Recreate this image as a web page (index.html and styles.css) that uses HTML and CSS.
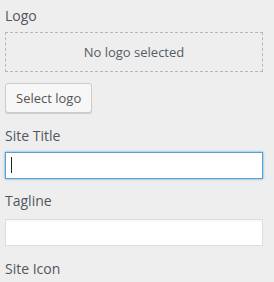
FILE: index.html
```html
<!DOCTYPE html>
<html>
<head>
<meta charset="utf-8">
<link rel="stylesheet" href="styles.css">
</head>
<body>
<div class="panel">
  <div class="control control-logo">
    <span class="title">Logo</span>
    <div class="placeholder">No logo selected</div>
    <button class="button" type="button">Select logo</button>
  </div>
  <div class="control control-site-title">
    <label class="title" for="site-title">Site Title</label>
    <div class="field-wrap">
      <input class="field focused" id="site-title" type="text">
      <span class="caret"></span>
    </div>
  </div>
  <div class="control control-tagline">
    <label class="title" for="tagline">Tagline</label>
    <input class="field" id="tagline" type="text">
  </div>
  <div class="control control-icon">
    <span class="title">Site Icon</span>
  </div>
</div>
</body>
</html>
```
FILE: styles.css
```css
html, body {
  margin: 0;
  padding: 0;
  background: #eeeeee;
}
body {
  font-family: "Open Sans", "Noto Sans", sans-serif;
  color: #555d66;
  overflow: hidden;
}
.panel {
  display: flex;
  flex-direction: column;
  padding: 6px 11px 0 5px;
}
.control {
  display: flex;
  flex-direction: column;
  align-items: stretch;
}
.title {
  display: block;
  font-size: 14px;
  line-height: 20px;
  font-weight: 400;
  color: #50575e;
}
.control-logo .title { margin-bottom: 6px; }
.placeholder {
  box-sizing: border-box;
  height: 40px;
  border: 1px dashed #b4b9be;
  display: flex;
  align-items: center;
  justify-content: center;
  font-size: 13px;
  color: #555d66;
}
.button {
  align-self: flex-start;
  box-sizing: border-box;
  margin-top: 11px;
  height: 30px;
  padding: 0 10px;
  font-family: inherit;
  font-size: 13px;
  color: #555;
  background: #f7f7f7;
  border: 1px solid #cccccc;
  border-radius: 3px;
  box-shadow: 0 1px 0 #cccccc;
}
.control-site-title { margin-top: 13px; }
.control-site-title .title { margin-bottom: 6px; }
.field-wrap {
  position: relative;
}
.field {
  display: block;
  box-sizing: border-box;
  width: 100%;
  height: 27px;
  margin: 0;
  padding: 2px 6px;
  font-family: inherit;
  font-size: 14px;
  background: #ffffff;
  border: 1px solid #dddddd;
  border-radius: 0;
  outline: none;
  box-shadow: inset 0 1px 2px rgba(0,0,0,0.04);
}
.field.focused {
  border-color: #5b9dd9;
  box-shadow: 0 0 2px rgba(30,140,190,0.8);
}
.caret {
  position: absolute;
  left: 6px;
  top: 5px;
  width: 1px;
  height: 16px;
  background: #222222;
}
.control-tagline { margin-top: 12px; }
.control-tagline .title { margin-bottom: 8px; }
.control-icon { margin-top: 13px; }
```
